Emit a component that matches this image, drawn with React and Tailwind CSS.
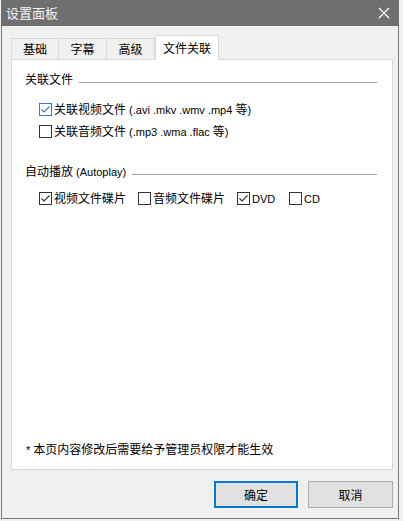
import React from "react";

const font = { fontFamily: '"Noto Sans CJK SC", sans-serif' };

function L({ children }) {
  return (
    <span className="text-[11px]" style={{ fontFamily: '"Liberation Sans", Arial, sans-serif' }}>
      {children}
    </span>
  );
}

function Box({ checked, hover }) {
  const c = hover ? "#2e7bcf" : "#333333";
  return (
    <svg width="13" height="13" viewBox="0 0 13 13" className="shrink-0">
      <rect x="0.5" y="0.5" width="12" height="12" fill="#ffffff" stroke={c} strokeWidth="1" />
      {checked && (
        <path d="M2.5 6.5 L5 9 L10.5 3.5" fill="none" stroke={c} strokeWidth="1.2" />
      )}
    </svg>
  );
}

function Check({ checked, hover, children, className = "" }) {
  return (
    <div className={"flex items-center h-4 " + className}>
      <Box checked={checked} hover={hover} />
      <span className="ml-[2px] text-[12px] leading-4 text-[#000] whitespace-pre">{children}</span>
    </div>
  );
}

function GroupHeader({ children }) {
  return (
    <div className="flex items-center h-4 pr-[15px]">
      <span className="text-[12px] leading-4 text-[#000] whitespace-pre">{children}</span>
      <div className="flex-1 ml-[6px] mt-[6px] h-0 border-t border-[#a0a0a0]" />
    </div>
  );
}

export default function App() {
  return (
    <div className="w-[403px] h-[521px] bg-[#f0f0f0] overflow-hidden" style={font}>
      <div className="w-[398px] h-[519px] ml-[1px] flex flex-col bg-[#f0f0f0] border-x border-b border-[#7a7a7a]">
        {/* title bar */}
        <div className="h-[26px] shrink-0 bg-[#6f6f6f] flex items-center pl-[5px] pr-[8px] -mx-px">
          <span className="text-[13px] text-[#f4f4f4] leading-4">设置面板</span>
          <svg width="12" height="12" viewBox="0 0 12 12" className="ml-auto mr-[1px]">
            <path d="M1 1 L11 11 M11 1 L1 11" stroke="#ffffff" strokeWidth="1.3" />
          </svg>
        </div>

        {/* tabs */}
        <div className="flex items-end h-[24px] mt-[9px] pl-[9px]">
          <div className="w-[48px] h-[21px] border border-b-0 border-[#d9d9d9] bg-[#f0f0f0] flex items-center justify-center text-[12px] text-[#000]">基础</div>
          <div className="w-[48px] h-[21px] border border-b-0 border-l-0 border-[#d9d9d9] bg-[#f0f0f0] flex items-center justify-center text-[12px] text-[#000]">字幕</div>
          <div className="w-[48px] h-[21px] border border-b-0 border-l-0 border-[#d9d9d9] bg-[#f0f0f0] flex items-center justify-center text-[12px] text-[#000]">高级</div>
          <div className="w-[64px] h-[25px] -mb-px relative z-10 border border-b-0 border-[#d9d9d9] bg-white flex items-center justify-center text-[12px] text-[#000] pb-[1px]">文件关联</div>
        </div>

        {/* panel */}
        <div className="ml-[9px] w-[382px] h-[411px] bg-white border border-[#d9d9d9] flex flex-col pl-[13px]">
          <div className="mt-[11px]">
            <GroupHeader>关联文件</GroupHeader>
          </div>
          <div className="pl-[14px] mt-[14px] flex flex-col gap-[6px]">
            <Check checked hover>
              关联视频文件<L> (.avi .mkv .wmv .mp4 </L>等<L>)</L>
            </Check>
            <Check>
              关联音频文件<L> (.mp3 .wma .flac </L>等<L>)</L>
            </Check>
          </div>
          <div className="mt-[24px]">
            <GroupHeader>
              自动播放<L> (Autoplay)</L>
            </GroupHeader>
          </div>
          <div className="pl-[14px] mt-[11px] flex items-center">
            <Check checked className="w-[99px]">视频文件碟片</Check>
            <Check className="w-[99px]">音频文件碟片</Check>
            <Check checked className="w-[52px]"><L>DVD</L></Check>
            <Check><L>CD</L></Check>
          </div>
          <div className="mt-auto mb-[11px] text-[12px] leading-4 text-[#000] pl-[1px]">
            <L>* </L>本页内容修改后需要给予管理员权限才能生效
          </div>
        </div>

        {/* buttons */}
        <div className="flex justify-end gap-[10px] mt-[11px] pr-[5px]">
          <button className="w-[84px] h-[27px] bg-[#e1e1e1] border-2 border-[#0078d7] text-[12px] text-[#000]">确定</button>
          <button className="w-[85px] h-[27px] bg-[#e1e1e1] border border-[#adadad] text-[12px] text-[#000]">取消</button>
        </div>
      </div>
    </div>
  );
}
